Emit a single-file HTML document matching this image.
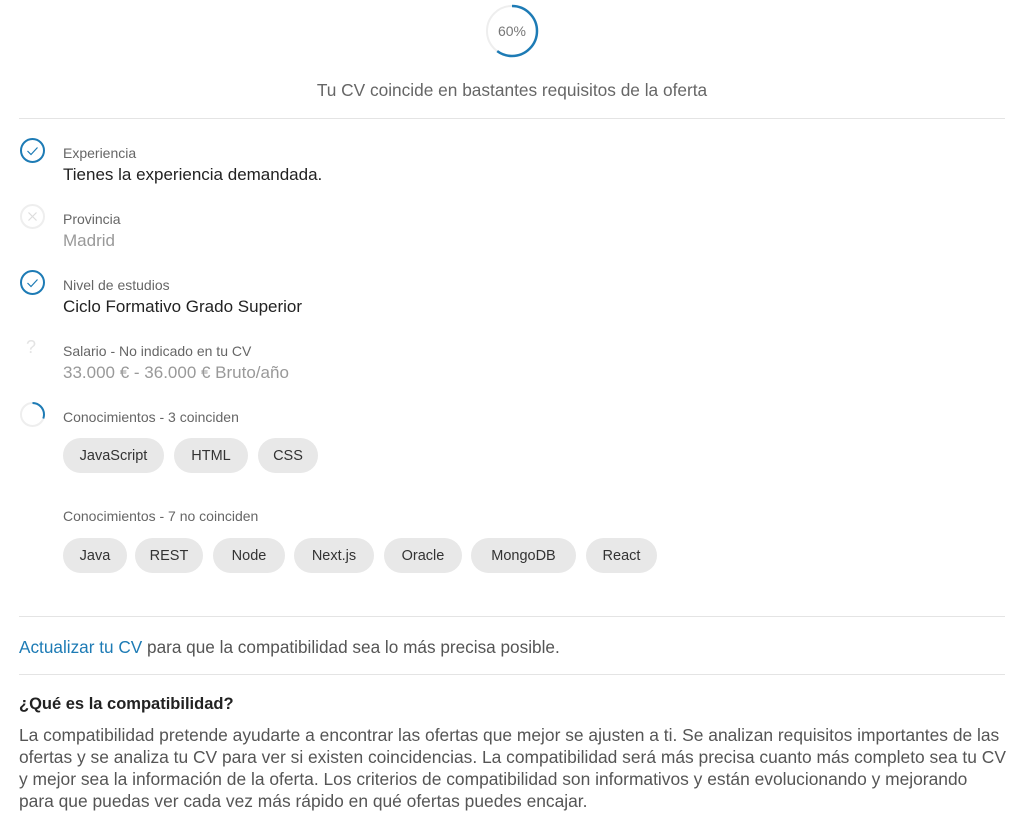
<!DOCTYPE html>
<html><head><meta charset="utf-8"><style>
body{margin:0;width:1015px;height:824px;background:#fff;font-family:"Liberation Sans",sans-serif;position:relative;overflow:hidden}
.a{position:absolute;white-space:nowrap}
.lbl{font-size:14px;color:#666}
.val{font-size:17px;color:#222}
.gval{font-size:17px;color:#999}
.chip{position:absolute;height:35px;line-height:37px;background:#e8e8e8;border-radius:18px;text-align:center;font-size:14.5px;color:#333}
.hr{position:absolute;left:19px;width:986px;height:1px;background:#e4e4e4}
.p{position:absolute;left:19px;font-size:17.4px;color:#555;white-space:nowrap}
</style></head><body>
<svg class="a" style="left:484px;top:3px" width="56" height="56" viewBox="0 0 56 56">
<circle cx="28" cy="28" r="25" fill="none" stroke="#eee" stroke-width="2"/>
<circle cx="28" cy="28" r="25" fill="none" stroke="#1d7bb5" stroke-width="2.5" stroke-dasharray="94.2 200" transform="rotate(-90 28 28)"/>
<text x="28" y="33" text-anchor="middle" font-family="Liberation Sans" font-size="14" fill="#777">60%</text>
</svg>
<div class="a" style="left:0;width:1024px;text-align:center;top:80px;font-size:17.3px;color:#666">Tu CV coincide en bastantes requisitos de la oferta</div>
<div class="hr" style="top:118px"></div>

<svg class="a" style="left:19px;top:137px" width="27" height="27"><circle cx="13.5" cy="13.5" r="11.5" fill="none" stroke="#1d7bb5" stroke-width="2"/><path d="M8.5 14l3.5 3.5 6.5-7" fill="none" stroke="#1d7bb5" stroke-width="1.2"/></svg>
<div class="a lbl" style="left:63px;top:145px">Experiencia</div>
<div class="a val" style="left:63px;top:165px">Tienes la experiencia demandada.</div>

<svg class="a" style="left:19px;top:203px" width="27" height="27"><circle cx="13.5" cy="13.5" r="11.5" fill="none" stroke="#eee" stroke-width="2"/><path d="M9.5 9.5l8 8M17.5 9.5l-8 8" stroke="#ddd" stroke-width="1.2"/></svg>
<div class="a lbl" style="left:63px;top:211px">Provincia</div>
<div class="a gval" style="left:63px;top:231px">Madrid</div>

<svg class="a" style="left:19px;top:269px" width="27" height="27"><circle cx="13.5" cy="13.5" r="11.5" fill="none" stroke="#1d7bb5" stroke-width="2"/><path d="M8.5 14l3.5 3.5 6.5-7" fill="none" stroke="#1d7bb5" stroke-width="1.2"/></svg>
<div class="a lbl" style="left:63px;top:277px">Nivel de estudios</div>
<div class="a val" style="left:63px;top:297px">Ciclo Formativo Grado Superior</div>

<div class="a" style="left:26px;top:337px;font-size:18px;color:#e4e4e4">?</div>
<div class="a lbl" style="left:63px;top:343px">Salario - No indicado en tu CV</div>
<div class="a gval" style="left:63px;top:363px">33.000 € - 36.000 € Bruto/año</div>

<svg class="a" style="left:19px;top:401px" width="27" height="27"><circle cx="13.5" cy="13.5" r="11.5" fill="none" stroke="#eee" stroke-width="2"/><circle cx="13.5" cy="13.5" r="11.5" fill="none" stroke="#1d7bb5" stroke-width="2" stroke-dasharray="22 100" transform="rotate(-90 13.5 13.5)"/></svg>
<div class="a lbl" style="left:63px;top:409px">Conocimientos - 3 coinciden</div>
<div class="chip" style="left:63px;top:438px;width:101px">JavaScript</div>
<div class="chip" style="left:174px;top:438px;width:74px">HTML</div>
<div class="chip" style="left:258px;top:438px;width:60px">CSS</div>

<div class="a lbl" style="left:63px;top:508px">Conocimientos - 7 no coinciden</div>
<div class="chip" style="left:63px;top:538px;width:64px">Java</div>
<div class="chip" style="left:135px;top:538px;width:68px">REST</div>
<div class="chip" style="left:213px;top:538px;width:72px">Node</div>
<div class="chip" style="left:294px;top:538px;width:80px">Next.js</div>
<div class="chip" style="left:384px;top:538px;width:78px">Oracle</div>
<div class="chip" style="left:471px;top:538px;width:105px">MongoDB</div>
<div class="chip" style="left:586px;top:538px;width:71px">React</div>

<div class="hr" style="top:616px"></div>
<div class="a" style="left:19px;top:637px;font-size:17.2px;color:#555"><span style="color:#1d7bb5">Actualizar tu CV</span> para que la compatibilidad sea lo más precisa posible.</div>
<div class="hr" style="top:674px"></div>
<div class="a" style="left:19px;top:695px;font-size:16.5px;font-weight:bold;color:#222">¿Qué es la compatibilidad?</div>
<div class="p" style="top:725px">La compatibilidad pretende ayudarte a encontrar las ofertas que mejor se ajusten a ti. Se analizan requisitos importantes de las</div>
<div class="p" style="top:747px">ofertas y se analiza tu CV para ver si existen coincidencias. La compatibilidad será más precisa cuanto más completo sea tu CV</div>
<div class="p" style="top:769px">y mejor sea la información de la oferta. Los criterios de compatibilidad son informativos y están evolucionando y mejorando</div>
<div class="p" style="top:791px">para que puedas ver cada vez más rápido en qué ofertas puedes encajar.</div>
</body></html>
